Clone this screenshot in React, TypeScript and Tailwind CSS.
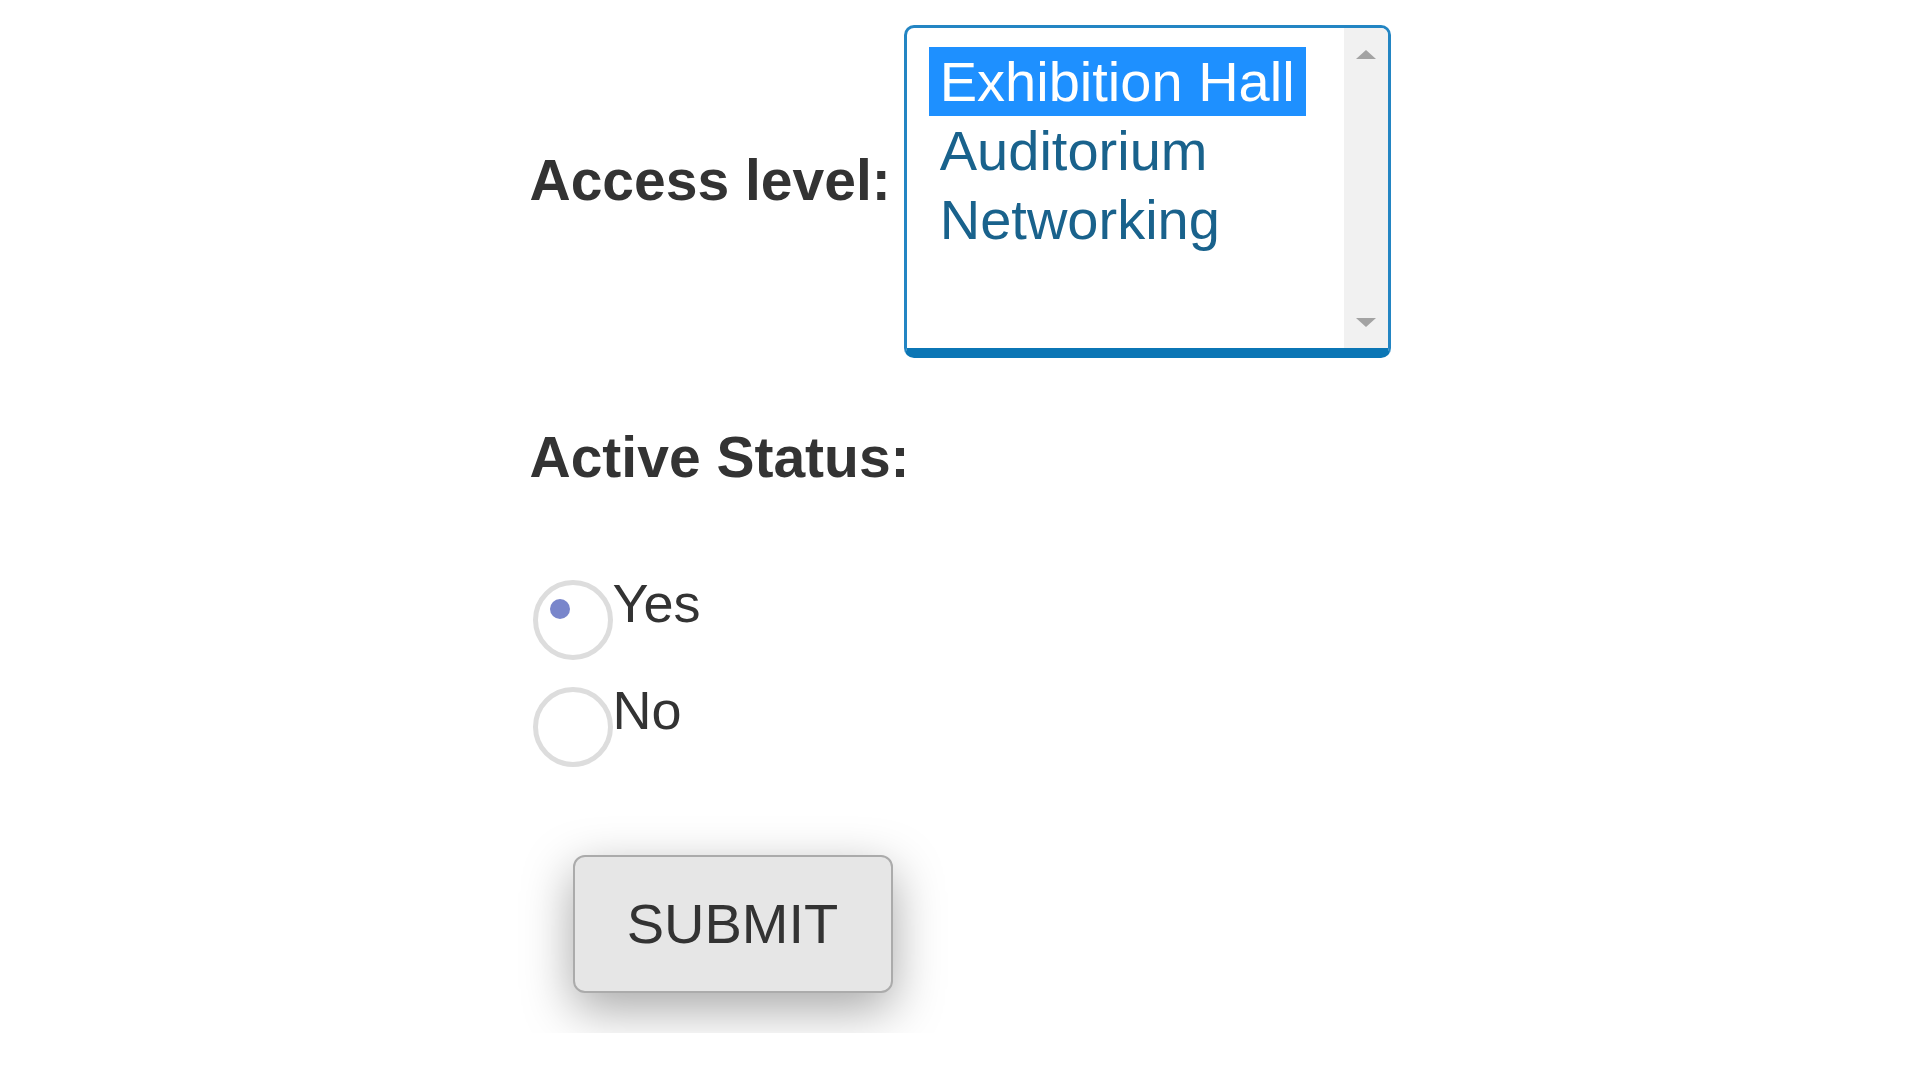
const options = ["Exhibition Hall", "Auditorium", "Networking"];

const Radio = ({ checked, label }: { checked?: boolean; label: string }) => (
  <label className="flex items-start">
    <span className="relative ml-[3px] h-[80px] w-[80px] shrink-0 rounded-full border-[5px] border-[#dddddd] bg-white">
      {checked && (
        <span className="absolute left-[12px] top-[14px] h-5 w-5 rounded-full bg-[#7986cb]"></span>
      )}
    </span>
    <span className="-mt-2 text-[54px] leading-[62px]">{label}</span>
  </label>
);

const App = () => {
  return (
    <div className="h-[1033px] overflow-hidden bg-white font-['Liberation_Sans',Arial,sans-serif] text-[#333333]">
      <form className="mx-auto w-[861px] pt-[25px]">
        <div className="flex items-center gap-[13px]">
          <label className="-mt-6 text-[57px] font-bold leading-[66px]">Access level:</label>
          <div className="flex h-[333px] flex-1 overflow-hidden rounded-[10px] border-[3px] border-[#2385c3] border-b-[10px] border-b-[#0b76b5] bg-white">
            <div className="flex flex-1 flex-col items-start pl-[22px] pt-[19px] text-[56px] leading-[69px] text-[#19628c]">
              {options.map((o, i) => (
                <div
                  key={o}
                  className={i === 0 ? "bg-[#1e90ff] px-[11px] text-white" : "px-[11px]"}
                >
                  {o}
                </div>
              ))}
            </div>
            <div className="flex w-[44px] flex-col items-center justify-between bg-[#f1f1f1] pb-[21px] pt-[22px]">
              <span className="h-0 w-0 border-x-[10px] border-b-[9px] border-x-transparent border-b-[#a3a3a3]"></span>
              <span className="h-0 w-0 border-x-[10px] border-t-[9px] border-x-transparent border-t-[#a3a3a3]"></span>
            </div>
          </div>
        </div>

        <h2 className="mt-[66px] text-[57px] font-bold leading-[66px]">Active Status:</h2>

        <div className="mt-[90px] flex flex-col gap-[27px]">
          <Radio checked label="Yes" />
          <Radio label="No" />
        </div>

        <button
          type="button"
          className="ml-[43px] mt-[88px] h-[138px] w-[320px] rounded-[12px] border-2 border-[#ababab] bg-[#e6e6e6] text-[56px] text-[#333333] shadow-[0_16px_50px_rgba(0,0,0,0.35)]"
        >
          SUBMIT
        </button>
      </form>
    </div>
  );
};

export default App;
